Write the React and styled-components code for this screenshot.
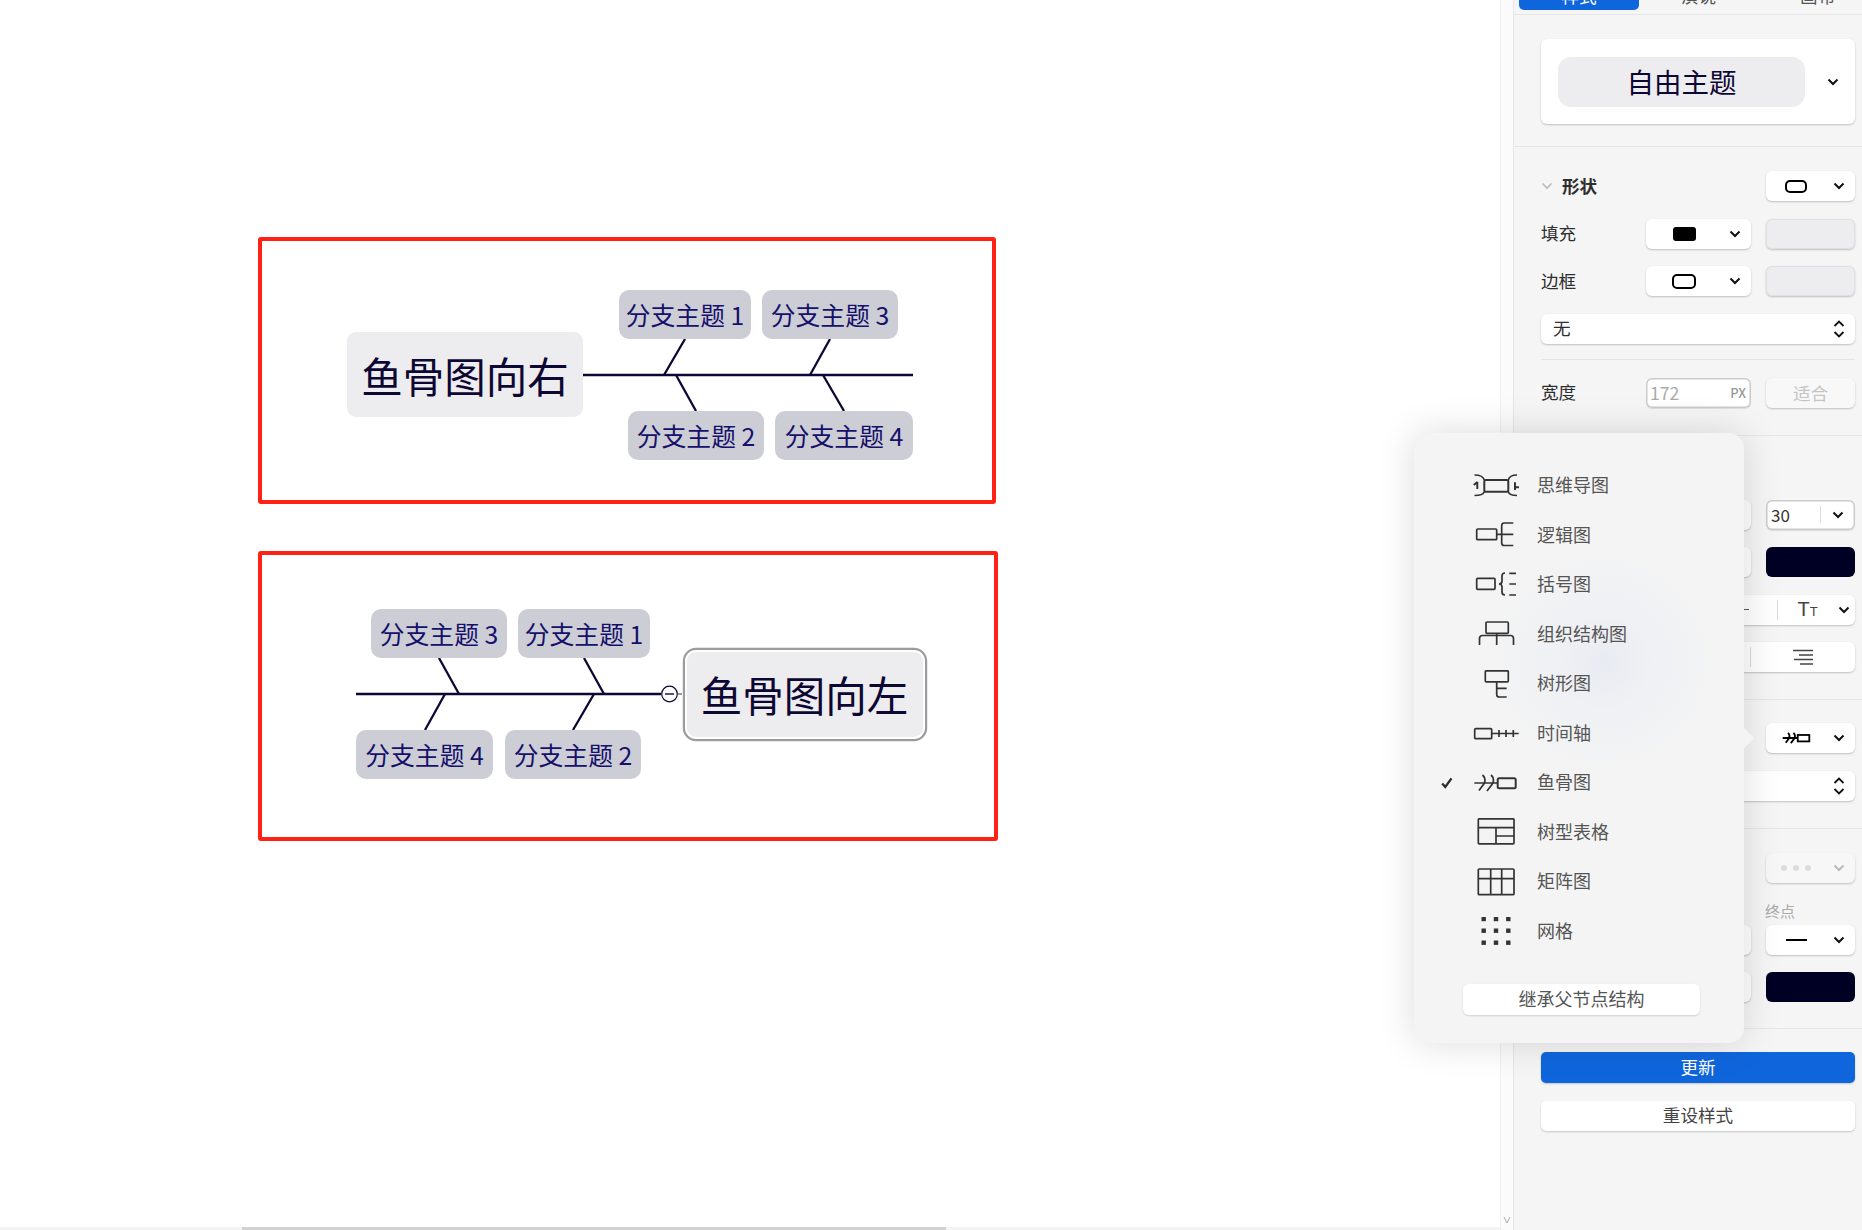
import React from "react";
import styled, { createGlobalStyle } from "styled-components";

const FONT = `"Noto Sans CJK SC", "Noto Sans", sans-serif`;
const INK = "#0d0733";

const GlobalStyle = createGlobalStyle`
  html, body {
    margin: 0;
    padding: 0;
    background: #fff;
    overflow: hidden;
  }
  * { box-sizing: border-box; }
`;

const Page = styled.div`
  position: relative;
  display: flex;
  width: 1862px;
  height: 1230px;
  overflow: hidden;
  font-family: ${FONT};
  font-size: 17.6px;
  font-weight: 300;
  color: #2e2e2e;
`;

/* canvas */
const Canvas = styled.div`
  flex: 0 0 1500px;
  display: flex;
  flex-direction: column;
`;

const Board = styled.div`
  position: relative;
  flex: 1;
  background: #fff;
`;

const HTrack = styled.div`
  flex: 0 0 3px;
  padding-left: 242px;
  background: #f3f3f3;
`;

const HThumb = styled.div`
  width: 704px;
  height: 3px;
  background: #d2d2d2;
`;

const Frame = styled.div`
  position: absolute;
  left: ${(p) => p.$x}px;
  top: ${(p) => p.$y}px;
  width: ${(p) => p.$w}px;
  height: ${(p) => p.$h}px;
  border: 4px solid #ff2113;
  border-radius: 3px;
`;

const Wires = styled.svg`
  position: absolute;
  left: 0;
  top: 0;
`;

const Topic = styled.div`
  position: absolute;
  left: ${(p) => p.$x}px;
  top: ${(p) => p.$y}px;
  width: ${(p) => p.$w}px;
  height: ${(p) => p.$h}px;
  display: flex;
  align-items: center;
  justify-content: center;
  padding-bottom: 2px;
  white-space: nowrap;
  border-radius: 10px;
  background: #cdcdd6;
  color: #15106a;
  font-size: 24.8px;
  font-weight: 400;
`;

const RootTopic = styled(Topic)`
  padding-bottom: 0;
  border-radius: 9px;
  background: #edecef;
  color: ${INK};
  font-size: 41.5px;
  box-shadow: ${(p) => (p.$selected ? "0 0 0 2px #fff, 0 0 0 4.2px #9c9c9c" : "none")};
`;

const subTopics = [
  { label: "分支主题 1", x: 619, y: 290, w: 132 },
  { label: "分支主题 3", x: 762, y: 290, w: 136 },
  { label: "分支主题 2", x: 628, y: 411, w: 136 },
  { label: "分支主题 4", x: 775, y: 411, w: 138 },
  { label: "分支主题 3", x: 371, y: 609, w: 136 },
  { label: "分支主题 1", x: 518, y: 609, w: 132 },
  { label: "分支主题 4", x: 356, y: 730, w: 137 },
  { label: "分支主题 2", x: 505, y: 730, w: 136 },
];

const bones = [
  [685, 339, 664, 375],
  [830, 339, 810, 375],
  [676, 375, 696, 411],
  [823, 375, 844, 411],
  [439, 658, 459, 694],
  [584, 658, 604, 694],
  [445, 694, 425, 730],
  [594, 694, 573, 730],
];

const Diagrams = () => (
  <Board>
    <Frame $x={258} $y={237} $w={738} $h={267} />
    <Frame $x={258} $y={551} $w={740} $h={290} />
    <Wires width="1500" height="1227" fill="none">
      <path d="M583 375H913" stroke={INK} strokeWidth="2.6" />
      <path d="M356 694H661" stroke={INK} strokeWidth="2.6" />
      <path d="M678 694H682" stroke="#9c9c9c" strokeWidth="2" />
      {bones.map(([x1, y1, x2, y2]) => (
        <line key={`${x1}-${y1}`} x1={x1} y1={y1} x2={x2} y2={y2} stroke={INK} strokeWidth="2.3" />
      ))}
      <circle cx="669.5" cy="694" r="7.8" fill="#fff" stroke={INK} strokeWidth="1.2" />
      <path d="M665 694H674" stroke={INK} strokeWidth="1.4" />
    </Wires>
    <RootTopic $x={686.5} $y={651.5} $w={236} $h={85} $selected>鱼骨图向左</RootTopic>
    <RootTopic $x={347} $y={332} $w={236} $h={85}>鱼骨图向右</RootTopic>
    {subTopics.map((t) => (
      <Topic key={`${t.x}-${t.y}`} $x={t.x} $y={t.y} $w={t.w} $h={49}>
        {t.label}
      </Topic>
    ))}
  </Board>
);

const VScroll = styled.div`
  flex: 0 0 14px;
  display: flex;
  align-items: flex-end;
  justify-content: center;
  padding-bottom: 6px;
  background: #fbfbfb;
  border-left: 1px solid #f0f0f0;
  border-right: 1px solid #e6e6e6;
`;

/* side panel */
const Panel = styled.aside`
  flex: 1;
  min-width: 0;
  overflow: hidden;
  background: #f5f5f5;
`;

const TabBar = styled.div`
  display: flex;
  align-items: flex-start;
  margin-top: -19px;
  height: 34px;
  padding-left: 5px;
  border-bottom: 1px solid #e6e6e6;
`;

const Tab = styled.div`
  flex: 0 0 ${(p) => (p.$active ? 120 : 119)}px;
  height: 29px;
  line-height: 29px;
  text-align: center;
  border-radius: 5px;
  color: ${(p) => (p.$active ? "#fff" : "#555")};
  font-weight: 400;
  background: ${(p) => (p.$active ? "#0f66dc" : "transparent")};
`;

const Section = styled.section`
  display: flex;
  flex-direction: column;
  gap: 17.5px;
  padding: ${(p) => p.$top}px 7px ${(p) => p.$bottom}px 27px;
  border-bottom: ${(p) => (p.$plain ? "none" : "1px solid #e6e6e6")};
`;

const ThemeCard = styled.div`
  display: flex;
  align-items: center;
  height: 85px;
  padding: 0 16px 0 17px;
  justify-content: space-between;
  background: #fff;
  border-radius: 6px;
  box-shadow: 0 1px 2px rgba(0, 0, 0, 0.22);
`;

const ThemePill = styled.div`
  width: 247px;
  height: 50px;
  display: flex;
  align-items: center;
  justify-content: center;
  padding-bottom: 2px;
  border-radius: 13px;
  background: #edecef;
  color: ${INK};
  font-size: 27.5px;
  font-weight: 400;
`;

const Row = styled.div`
  display: flex;
  align-items: center;
  gap: 15px;
  height: 30px;
`;

const Label = styled.span`
  flex: 0 0 90px;
  padding-bottom: 2px;
  font-weight: 400;
`;

const HeadLabel = styled.div`
  flex: 1;
  display: flex;
  align-items: center;
  gap: 9px;
  font-weight: 700;
`;

const HeadText = styled.span`
  padding-bottom: 2px;
`;

const Spacer = styled.div`
  flex: 1;
`;

const Box = styled.div`
  flex: ${(p) => (p.$w ? `0 0 ${p.$w}px` : "1")};
  display: flex;
  align-items: center;
  height: 30px;
  min-width: 0;
  border-radius: 6px;
  background: ${(p) => (p.$muted ? "#f7f7f7" : "#fff")};
  box-shadow: 0 1px 2px rgba(0, 0, 0, 0.22);
`;

const SegmentGroup = styled(Box)`
  display: grid;
  grid-template-columns: repeat(${(p) => p.$n}, 1fr);
`;

const Preview = styled.div`
  flex: 1;
  display: flex;
  align-items: center;
  justify-content: center;
  padding-right: ${(p) => (p.$flush ? 0 : 7)}px;
`;

const Caret = styled.svg`
  flex: 0 0 12px;
  margin-right: ${(p) => p.$right ?? 10}px;
`;

const Swatch = styled.div`
  flex: 0 0 89px;
  height: 30px;
  border-radius: 6px;
  background: ${(p) => p.$color};
  box-shadow: ${(p) => (p.$dark ? "none" : "inset 0 0 0 1px #e0dfe2, 0 1px 2px rgba(0, 0, 0, 0.22)")};
`;

const FillChip = styled.div`
  width: 23px;
  height: 14px;
  border-radius: 3px;
  background: #000;
`;

const OutlineChip = styled.div`
  width: 24px;
  height: 15px;
  border: 2px solid #000;
  border-radius: 5px;
`;

const SmallOutline = styled(OutlineChip)`
  width: 22px;
  height: 13px;
`;

const SelectText = styled.span`
  flex: 1;
  padding: 0 0 2px 12px;
  font-weight: 400;
`;

const Hairline = styled.div`
  height: 1px;
  margin-top: -2px;
  background: #e4e4e4;
`;

const FieldBox = styled(Box)`
  padding: 0 5px 0 4px;
  justify-content: space-between;
  box-shadow: inset 0 0 0 1.5px #cbcbcb, 0 1px 1px rgba(0, 0, 0, 0.1);
  color: #aaa;
  font-weight: 400;
`;

const Unit = styled.span`
  font-size: 13px;
  font-weight: 500;
  color: #999;
`;

const GhostButton = styled(Box)`
  justify-content: center;
  background: #f8f8f8;
  color: #c4c4c4;
  font-weight: 400;
`;

const SizeBox = styled(FieldBox)`
  padding: 0;
  color: #333;
`;

const SizeValue = styled.span`
  flex: 0 0 55px;
  padding-left: 5px;
  border-right: 1px solid #ddd;
  line-height: 17px;
  font-size: 17px;
  font-weight: 400;
`;

const Segment = styled.div`
  height: 20px;
  display: flex;
  align-items: center;
  justify-content: ${(p) => (p.$split ? "space-between" : "center")};
  padding: ${(p) => (p.$split ? "0 5px 0 20px" : "0")};
  border-left: ${(p) => (p.$first ? "none" : "1px solid #dadada")};
`;

const Strike = styled.div`
  width: 18px;
  height: 1.5px;
  margin-left: 5px;
  background: #555;
`;

const CaseGlyph = styled.span`
  font-family: "Liberation Sans", sans-serif;
  font-size: 20px;
  color: #444;
`;

const CaseSmall = styled.small`
  font-size: 13px;
`;

const Dots = styled.div`
  display: flex;
  gap: 6px;
`;

const Dot = styled.i`
  width: 6px;
  height: 6px;
  border-radius: 50%;
  background: #dcdcdc;
`;

const EndCol = styled.div`
  flex: 0 0 89px;
  display: flex;
  flex-direction: column;
  gap: 6px;
`;

const EndBox = styled(Box)`
  flex: none;
`;

const SmallLabel = styled.span`
  height: 16px;
  line-height: 16px;
  margin-left: -1px;
  font-size: 15px;
  font-weight: 400;
  color: #aaa;
`;

const EndRow = styled(Row)`
  height: auto;
  align-items: flex-end;
  margin-top: 2.5px;
`;

const Dash = styled.div`
  width: 21px;
  height: 2px;
  background: #000;
`;

const ActionButton = styled.button`
  display: block;
  width: 100%;
  height: ${(p) => (p.$primary ? 31 : 30)}px;
  padding: 0 0 2px;
  border: 0;
  border-radius: 5px;
  font: inherit;
  font-weight: 400;
  color: ${(p) => (p.$primary ? "#fff" : "#444")};
  background: ${(p) => (p.$primary ? "#0f66dc" : "#fff")};
  box-shadow: 0 1px 2px rgba(0, 0, 0, 0.2);
`;

/* structure popover */
const Popover = styled.div`
  position: absolute;
  left: 1414px;
  top: 433px;
  width: 330px;
  height: 610px;
  padding: 28px 0;
  border-radius: 15px;
  background:
    radial-gradient(circle at 190px 228px, #e8ebf2 0, rgba(235, 238, 244, 0.55) 50px, rgba(240, 241, 243, 0) 120px),
    #f4f4f4;
  box-shadow: 0 0 38px rgba(0, 0, 0, 0.14);

  &::after {
    content: "";
    position: absolute;
    right: -7px;
    top: 297px;
    width: 16px;
    height: 16px;
    transform: rotate(45deg);
    background: #f4f4f4;
  }
`;

const MenuItem = styled.div`
  display: flex;
  align-items: center;
  height: 49.5px;
  padding-left: 27px;
  font-size: 18px;
  font-weight: 400;
  color: #555;
`;

const CheckSlot = styled.div`
  flex: 0 0 31px;
  display: flex;
  align-items: center;
`;

const MenuIcon = styled.svg`
  flex: 0 0 48px;
  margin-right: 17px;
`;

const MenuText = styled.span`
  padding-bottom: 3px;
`;

const InheritButton = styled.div`
  display: flex;
  align-items: center;
  justify-content: center;
  width: 237px;
  height: 31px;
  margin: 28px 0 0 49px;
  padding-bottom: 3px;
  border-radius: 6px;
  background: #fff;
  font-size: 18px;
  font-weight: 400;
  color: #555;
  box-shadow: 0 1px 2px rgba(0, 0, 0, 0.15);
`;

const Chevron = ({ color = "#111", right }) => (
  <Caret $right={right} width="12" height="8" viewBox="0 0 12 8" fill="none">
    <path d="M1.5 1.5L6 6L10.5 1.5" stroke={color} strokeWidth="2" />
  </Caret>
);

const UpDown = () => (
  <Caret width="12" height="20" viewBox="0 0 12 20" fill="none">
    <path d="M1.5 7L6 2.5L10.5 7" stroke="#111" strokeWidth="1.8" />
    <path d="M1.5 13L6 17.5L10.5 13" stroke="#111" strokeWidth="1.8" />
  </Caret>
);

const FISHBONE = "M2.3 14H25.7M10.5 6Q14 9 12.5 14L7 21.5M19 6Q22.5 9 21 14L15 22";

const FishboneMini = () => (
  <svg width="30" height="18" viewBox="0 0 46 28" fill="none" stroke="#000" strokeWidth="2.8">
    <path d={FISHBONE} />
    <rect x="25.7" y="9.3" width="18" height="10" />
  </svg>
);

const AlignRight = () => (
  <svg width="20" height="16" viewBox="0 0 20 16" fill="none" stroke="#444" strokeWidth="1.4">
    <path d="M0 1.5H20M6 6H20M1 10.5H20M7 15H20" />
  </svg>
);

const menuIcons = {
  mind: (
    <>
      <rect x="12.3" y="8" width="24" height="11.7" rx="1.5" strokeWidth="2" />
      <path d="M2.5 3Q11 3 12.3 8M2.5 23.5Q11 23.5 12.3 19.7M45 3Q37.5 3 36.3 8M45 23.5Q37.5 23.5 36.3 19.7" />
      <path d="M5.3 9.7V17M1.8 13L5.3 10M43 10.3V18M43 15.3H47" strokeWidth="2" />
    </>
  ),
  logic: (
    <>
      <rect x="4.7" y="8" width="20" height="10.7" rx="1" />
      <path d="M24.7 13.3H41.3M41.3 2H32.2Q29.7 2 29.7 4.5V22Q29.7 24.5 32.2 24.5H41.3" />
    </>
  ),
  brace: (
    <>
      <rect x="4.7" y="7.3" width="18.3" height="11" rx="1" />
      <path d="M33 2C30.5 2 30 3 30 5V10C30 12 29 13 27 13C29 13 30 14 30 16V21C30 23 30.5 24 33 24" />
      <path d="M37.3 2.3H44M37.3 13H44M37.3 24H44" />
    </>
  ),
  org: (
    <>
      <rect x="14" y="2" width="22.3" height="11.3" rx="1" />
      <path d="M24.7 13.3V25M7.5 25V18.5Q7.5 15.5 10.5 15.5H38.5Q41.5 15.5 41.5 18.5V25" />
    </>
  ),
  tree: (
    <>
      <rect x="13.3" y="0.8" width="23" height="11" rx="1" />
      <path d="M24.7 11.8V24.5Q24.7 27 27.2 27H34.7M24.7 18.3H34.7" />
    </>
  ),
  timeline: (
    <>
      <rect x="2.7" y="9.7" width="17" height="10" rx="1" />
      <path d="M19.7 14.5H46.7M27 11V18M34 11V18M41.3 11V18" />
    </>
  ),
  fishbone: (
    <>
      <path d={FISHBONE} />
      <rect x="25.7" y="9.3" width="18" height="10" rx="1.5" strokeWidth="2" />
    </>
  ),
  treeTable: (
    <>
      <rect x="6.3" y="0.8" width="35.7" height="25" rx="1" />
      <path d="M6.3 9.7H42M24 9.7V25.8M24 18H42" />
    </>
  ),
  matrix: (
    <>
      <rect x="6.3" y="1" width="35.7" height="25.7" rx="1" />
      <path d="M6.3 10.7H42M18.7 1V26.7M29.7 1V26.7" />
    </>
  ),
  grid: [11.7, 24, 36.3].flatMap((x) =>
    [2, 13.7, 25.7].map((y) => (
      <rect key={`${x}-${y}`} x={x - 2.2} y={y - 2.2} width="4.4" height="4.4" fill="#333" stroke="none" />
    ))
  ),
};

const menu = [
  { key: "mind", label: "思维导图" },
  { key: "logic", label: "逻辑图" },
  { key: "brace", label: "括号图" },
  { key: "org", label: "组织结构图" },
  { key: "tree", label: "树形图" },
  { key: "timeline", label: "时间轴" },
  { key: "fishbone", label: "鱼骨图", checked: true },
  { key: "treeTable", label: "树型表格" },
  { key: "matrix", label: "矩阵图" },
  { key: "grid", label: "网格" },
];

const StructureMenu = () => (
  <Popover>
    {menu.map((item) => (
      <MenuItem key={item.key}>
        <CheckSlot>
          {item.checked && (
            <svg width="12" height="12" viewBox="0 0 12 12" fill="none">
              <path d="M1.2 6.5L4.3 10L10.5 1.3" stroke="#2a2a2a" strokeWidth="2.3" />
            </svg>
          )}
        </CheckSlot>
        <MenuIcon width="48" height="28" viewBox="0 0 48 28" fill="none" stroke="#333" strokeWidth="1.7">
          {menuIcons[item.key]}
        </MenuIcon>
        <MenuText>{item.label}</MenuText>
      </MenuItem>
    ))}
    <InheritButton>继承父节点结构</InheritButton>
  </Popover>
);

const Sidebar = () => (
  <Panel>
    <TabBar>
      <Tab $active>样式</Tab>
      <Tab>演说</Tab>
      <Tab>画布</Tab>
    </TabBar>

    <Section $top={24} $bottom={22}>
      <ThemeCard>
        <ThemePill>自由主题</ThemePill>
        <Chevron right={0} />
      </ThemeCard>
    </Section>

    <Section $top={24} $bottom={27}>
      <Row>
        <HeadLabel>
          <svg width="12" height="8" viewBox="0 0 12 8" fill="none">
            <path d="M1.5 1.5L6 6L10.5 1.5" stroke="#bbb" strokeWidth="1.6" />
          </svg>
          <HeadText>形状</HeadText>
        </HeadLabel>
        <Box $w={89}>
          <Preview><SmallOutline /></Preview>
          <Chevron />
        </Box>
      </Row>
      <Row>
        <Label>填充</Label>
        <Box>
          <Preview><FillChip /></Preview>
          <Chevron />
        </Box>
        <Swatch $color="#edecef" />
      </Row>
      <Row>
        <Label>边框</Label>
        <Box>
          <Preview><OutlineChip /></Preview>
          <Chevron />
        </Box>
        <Swatch $color="#edecef" />
      </Row>
      <Row>
        <Box>
          <SelectText>无</SelectText>
          <UpDown />
        </Box>
      </Row>
      <Hairline />
      <Row>
        <Label>宽度</Label>
        <FieldBox>
          172
          <Unit>PX</Unit>
        </FieldBox>
        <GhostButton $w={89}>适合</GhostButton>
      </Row>
    </Section>

    <Section $top={64} $bottom={27}>
      <Row>
        <Box>
          <SelectText />
          <Chevron />
        </Box>
        <SizeBox $w={89}>
          <SizeValue>30</SizeValue>
          <Preview $flush><Chevron right={0} /></Preview>
        </SizeBox>
      </Row>
      <Row>
        <Box />
        <Swatch $color="#000024" $dark />
      </Row>
      <Row>
        <SegmentGroup $n={4}>
          <Segment $first />
          <Segment />
          <Segment><Strike /></Segment>
          <Segment $split>
            <CaseGlyph>T<CaseSmall>T</CaseSmall></CaseGlyph>
            <Chevron right={0} />
          </Segment>
        </SegmentGroup>
      </Row>
      <Row>
        <SegmentGroup $n={3}>
          <Segment $first />
          <Segment />
          <Segment><AlignRight /></Segment>
        </SegmentGroup>
      </Row>
    </Section>

    <Section $top={23} $bottom={27}>
      <Row>
        <Spacer />
        <Box $w={89}>
          <Preview><FishboneMini /></Preview>
          <Chevron />
        </Box>
      </Row>
      <Row>
        <Box>
          <SelectText />
          <UpDown />
        </Box>
      </Row>
    </Section>

    <Section $top={24} $bottom={26}>
      <Row>
        <Spacer />
        <Box $w={89} $muted>
          <Preview>
            <Dots><Dot /><Dot /><Dot /></Dots>
          </Preview>
          <Chevron color="#bbb" />
        </Box>
      </Row>
      <EndRow>
        <Box />
        <EndCol>
          <SmallLabel>终点</SmallLabel>
          <EndBox>
            <Preview><Dash /></Preview>
            <Chevron />
          </EndBox>
        </EndCol>
      </EndRow>
      <Row>
        <Box />
        <Swatch $color="#000024" $dark />
      </Row>
    </Section>

    <Section $top={23} $bottom={0} $plain>
      <ActionButton $primary>更新</ActionButton>
      <ActionButton>重设样式</ActionButton>
    </Section>
  </Panel>
);

export default function App() {
  return (
    <>
      <GlobalStyle />
      <Page>
        <Canvas>
          <Diagrams />
          <HTrack>
            <HThumb />
          </HTrack>
        </Canvas>
        <VScroll>
          <svg width="8" height="8" viewBox="0 0 8 8" fill="none">
            <path d="M1 1L4 7L7 1" stroke="#aaa" strokeWidth="1" />
          </svg>
        </VScroll>
        <Sidebar />
        <StructureMenu />
      </Page>
    </>
  );
}
